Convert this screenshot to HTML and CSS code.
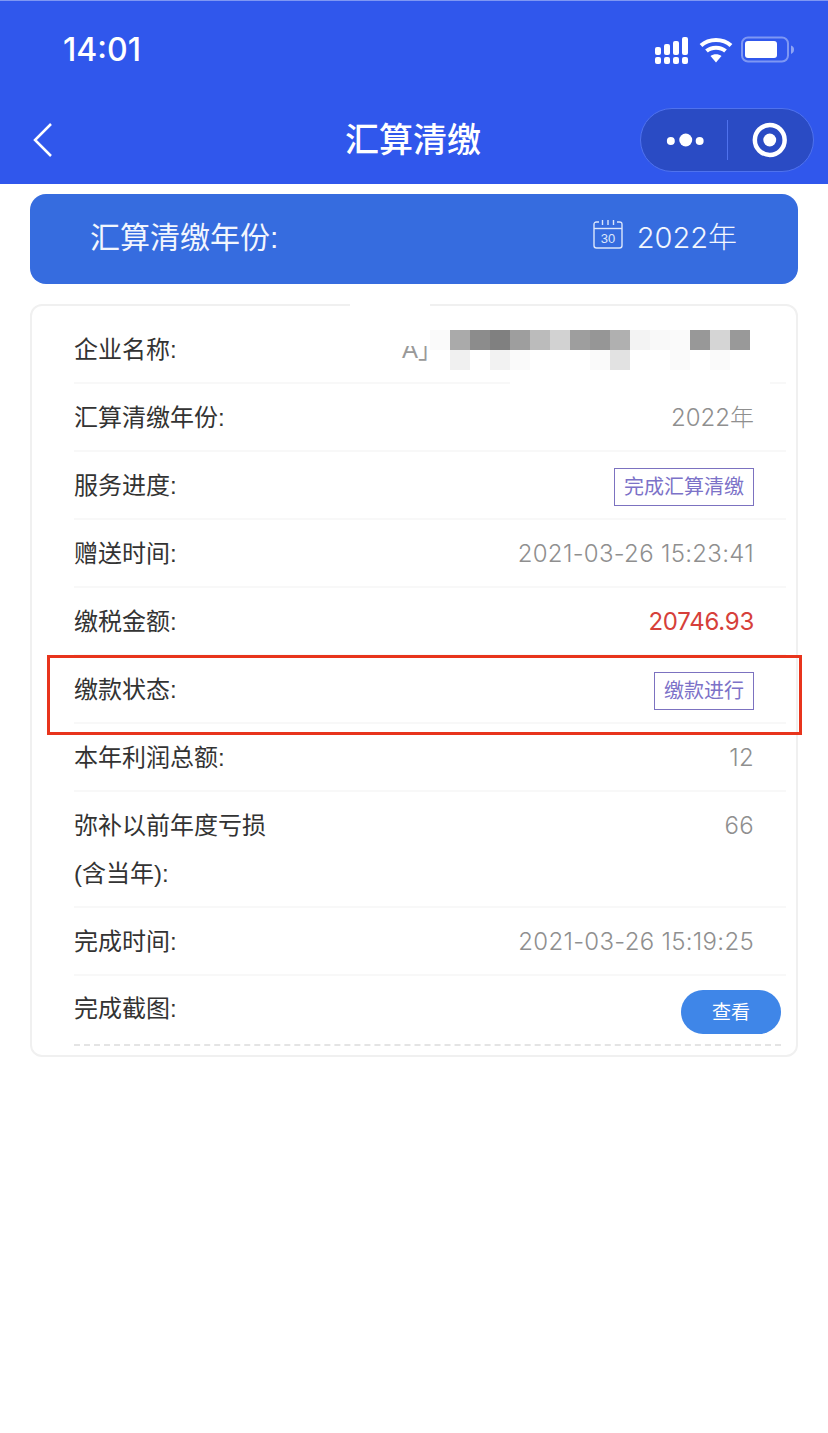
FILE: index.html
```html
<!DOCTYPE html>
<html lang="zh-CN">
<head>
    <meta charset="UTF-8">
    <meta name="viewport" content="width=device-width, initial-scale=1.0">
    <title>汇算清缴</title>
    <link rel="stylesheet" href="styles.css">
</head>
<body>
    <header class="top-bar">
        <div class="status-bar">
            <span class="clock">14:01</span>
            <svg class="status-icons" width="140" height="28" viewBox="0 0 140 28">
                <g fill="#fff">
                    <rect x="0" y="11" width="6" height="8" rx="2"/>
                    <rect x="9" y="8" width="6" height="11" rx="2"/>
                    <rect x="18" y="5" width="6" height="14" rx="2"/>
                    <rect x="27" y="1" width="6" height="18" rx="2"/>
                    <rect x="0" y="21" width="6" height="7" rx="2"/>
                    <rect x="9" y="21" width="6" height="7" rx="2"/>
                    <rect x="18" y="21" width="6" height="7" rx="2"/>
                    <rect x="27" y="21" width="6" height="7" rx="2"/>
                </g>
                <g fill="none" stroke="#fff" stroke-width="4">
                    <path d="M46 9.5C54 2 68 2 76 9.5"/>
                    <path d="M51.500 15C56.500 10.500 65.500 10.500 70.500 15"/>
                </g>
                <path d="M55.500 20C58.500 17.500 63.500 17.500 66.500 20L61 26.500Z" fill="#fff"/>
                <rect x="87" y="1.500" width="46" height="24" rx="6" fill="none" stroke="#7e97f3" stroke-width="2"/>
                <rect x="90" y="5" width="32" height="17" rx="3" fill="#fff"/>
                <path d="M136 9.500C138.500 10 139 12 139 13.500S138.500 17 136 18Z" fill="#8ea4f4"/>
            </svg>
        </div>
        <nav class="nav-bar">
            <svg class="back-icon" width="22" height="36" viewBox="0 0 22 36">
                <path d="M19 2L3 18L19 34" fill="none" stroke="#fff" stroke-width="2.500"/>
            </svg>
            <h1 class="page-title">汇算清缴</h1>
            <div class="capsule">
                <svg width="86" height="62" viewBox="0 0 86 62">
                    <circle cx="30" cy="32" r="4" fill="#fff"/>
                    <circle cx="45" cy="31" r="6.500" fill="#fff"/>
                    <circle cx="59" cy="32" r="4" fill="#fff"/>
                </svg>
                <span class="capsule-line"></span>
                <svg width="86" height="62" viewBox="0 0 86 62">
                    <circle cx="42" cy="31" r="15" fill="none" stroke="#fff" stroke-width="4.500"/>
                    <circle cx="42" cy="31" r="6.500" fill="#fff"/>
                </svg>
            </div>
        </nav>
    </header>

    <main>
        <section class="year-banner">
            <span class="year-label">汇算清缴年份:</span>
            <div class="year-pick">
                <svg width="30" height="30" viewBox="0 0 30 30">
                    <g fill="none" stroke="#dbe6fb" stroke-width="1.400">
                        <path d="M6 3H3.500Q1 3 1 5.500V26.500Q1 29 3.500 29H26.500Q29 29 29 26.500V5.500Q29 3 26.500 3H24"/>
                        <path d="M1 9.500H29"/>
                        <path d="M9.500 1V6M15 1V6M20.500 1V6"/>
                    </g>
                    <text class="cal-day" x="15" y="24" text-anchor="middle">30</text>
                </svg>
                <span class="year-val">2022年</span>
            </div>
        </section>

        <section class="detail-card">
            <div class="row"><span class="lbl">企业名称:</span></div>
            <div class="row"><span class="lbl">汇算清缴年份:</span><span class="val val-year">2022年</span></div>
            <div class="row"><span class="lbl">服务进度:</span><span class="tag">完成汇算清缴</span></div>
            <div class="row"><span class="lbl">赠送时间:</span><span class="val">2021-03-26 15:23:41</span></div>
            <div class="row"><span class="lbl">缴税金额:</span><span class="val money">20746.93</span></div>
            <div class="row"><span class="lbl">缴款状态:</span><span class="tag">缴款进行</span></div>
            <div class="row"><span class="lbl">本年利润总额:</span><span class="val">12</span></div>
            <div class="row row-tall"><span>弥补以前年度亏损<br>(含当年):</span><span class="val">66</span></div>
            <div class="row"><span class="lbl">完成时间:</span><span class="val">2021-03-26 15:19:25</span></div>
            <div class="row row-last"><span class="lbl">完成截图:</span><button class="view-btn">查看</button></div>

            <!-- retouched bits of the screenshot -->
            <div class="wipe wipe-top"></div>
            <div class="wipe wipe-line"></div>
            <svg class="mosaic" width="360" height="40" viewBox="0 0 360 40">
                <text class="mosaic-text" x="12" y="28">A」</text>
                <rect x="0" y="0" width="40" height="16" fill="#fff"/>
                <g>
                    <rect x="40" y="0" width="20" height="20" fill="#fafafa"/>
                    <rect x="60" y="0" width="20" height="20" fill="#aaaaaa"/>
                    <rect x="80" y="0" width="20" height="20" fill="#8c8c8c"/>
                    <rect x="100" y="0" width="20" height="20" fill="#808080"/>
                    <rect x="120" y="0" width="20" height="20" fill="#9e9e9e"/>
                    <rect x="140" y="0" width="20" height="20" fill="#bbbbbb"/>
                    <rect x="160" y="0" width="20" height="20" fill="#d2d2d2"/>
                    <rect x="180" y="0" width="20" height="20" fill="#9e9e9e"/>
                    <rect x="200" y="0" width="20" height="20" fill="#969696"/>
                    <rect x="220" y="0" width="20" height="20" fill="#b0b0b0"/>
                    <rect x="240" y="0" width="20" height="20" fill="#f3f3f3"/>
                    <rect x="260" y="0" width="20" height="20" fill="#f9f9f9"/>
                    <rect x="280" y="0" width="20" height="20" fill="#fafafa"/>
                    <rect x="300" y="0" width="20" height="20" fill="#989898"/>
                    <rect x="320" y="0" width="20" height="20" fill="#d5d5d5"/>
                    <rect x="340" y="0" width="20" height="20" fill="#999999"/>
                    <rect x="60" y="20" width="20" height="20" fill="#f0f0f0"/>
                    <rect x="100" y="20" width="20" height="20" fill="#f2f2f2"/>
                    <rect x="120" y="20" width="20" height="20" fill="#fafafa"/>
                    <rect x="200" y="20" width="20" height="20" fill="#fafafa"/>
                    <rect x="220" y="20" width="20" height="20" fill="#e2e2e2"/>
                    <rect x="280" y="20" width="20" height="20" fill="#fafafa"/>
                    <rect x="320" y="20" width="20" height="20" fill="#fafafa"/>
                </g>
            </svg>
        </section>

        <div class="highlight"></div>
    </main>
</body>
</html>
```

FILE: styles.css
```css
body {
    margin: 0;
    background: #fff;
    font-family: "Liberation Sans", "Noto Sans CJK SC", sans-serif;
    color: #333;
}

main {
    position: relative;
    padding: 10px 30px 0;
}

.top-bar {
    height: 183px;
    background: #3057ec;
    border-top: 1px solid #7f97f3;
    color: #fff;
}

.status-bar {
    height: 99px;
    display: flex;
    justify-content: space-between;
    padding: 0 33px 0 63px;
}

.clock {
    font-family: Inter, sans-serif;
    font-size: 32px;
    font-weight: 500;
    line-height: 98px;
}

.status-icons {
    margin-top: 35px;
}

.nav-bar {
    height: 84px;
    position: relative;
    display: flex;
    align-items: center;
    justify-content: space-between;
    padding: 0 14px 0 32px;
}

.back-icon {
    margin-top: -4px;
}

.page-title {
    position: absolute;
    left: 0;
    right: 2px;
    top: 16px;
    margin: 0;
    text-align: center;
    font-size: 34px;
    font-weight: 500;
    line-height: 48px;
}

.capsule {
    width: 172px;
    height: 62px;
    margin-top: -4px;
    display: flex;
    align-items: center;
    background: #2a4bc4;
    border: 1px solid #4f72ee;
    border-radius: 32px;
}

.capsule-line {
    width: 1px;
    height: 40px;
    background: #4f72ee;
}

.year-banner {
    height: 90px;
    padding: 0 61px 0 60px;
    display: flex;
    align-items: center;
    justify-content: space-between;
    background: #366cdf;
    border-radius: 16px;
    color: #f2f6fe;
    font-size: 30px;
}

.year-label {
    margin-top: -8px;
}

.year-pick {
    display: flex;
    align-items: center;
    gap: 14px;
}

.year-pick svg {
    margin-top: -10px;
}

.year-val {
    font-family: Inter, "Noto Sans CJK SC", sans-serif;
    font-size: 29px;
    font-weight: 300;
    margin-top: -8px;
}

.cal-day {
    font-size: 13px;
    fill: #dbe6fb;
}

.detail-card {
    position: relative;
    margin-top: 20px;
    padding-top: 10px;
    height: 739px;
    border: 2px solid #f0f0f0;
    border-radius: 12px;
}

.row {
    height: 66px;
    margin: 0 10px 0 42px;
    padding-right: 32px;
    display: flex;
    align-items: center;
    justify-content: space-between;
    border-bottom: 2px solid #f8f8f8;
    font-size: 24px;
}

.lbl {
    margin-top: -4px;
}

.row-tall {
    height: 114px;
    align-items: flex-start;
    line-height: 48px;
}

.row-tall span {
    margin-top: 10px;
}

.row-last {
    height: 68px;
    padding-right: 0;
    margin-right: 15px;
    border-bottom: 2px dashed #e4e4e4;
}

.row-last .lbl {
    margin-top: -8px;
}

.val {
    font-family: Inter, "Noto Sans CJK SC", sans-serif;
    font-weight: 300;
    letter-spacing: 0.3px;
    color: #8f8f8f;
}

.val-year {
    margin-top: -4px;
    letter-spacing: 0;
}

.money {
    color: #d6403a;
    font-weight: 400;
    letter-spacing: -0.25px;
}

.tag {
    height: 36px;
    margin-top: 4px;
    padding: 0 9px;
    border: 1px solid #7c72c0;
    color: #7c72c8;
    font-size: 20px;
    line-height: 36px;
}

.view-btn {
    width: 100px;
    height: 44px;
    margin-top: 4px;
    padding: 0 0 4px;
    background: #3f86e8;
    border: none;
    border-radius: 22px;
    color: #fff;
    font-family: inherit;
    font-size: 19px;
}

.wipe {
    position: absolute;
    background: #fff;
}

.wipe-top {
    left: 318px;
    top: -4px;
    width: 80px;
    height: 10px;
}

.wipe-line {
    left: 478px;
    top: 74px;
    width: 260px;
    height: 6px;
}

.mosaic {
    position: absolute;
    left: 358px;
    top: 24px;
}

.mosaic-text {
    font-size: 24px;
    fill: #999;
}

.highlight {
    position: absolute;
    left: 47px;
    top: 471px;
    width: 749px;
    height: 74px;
    border: 3px solid #e8341c;
}
```
